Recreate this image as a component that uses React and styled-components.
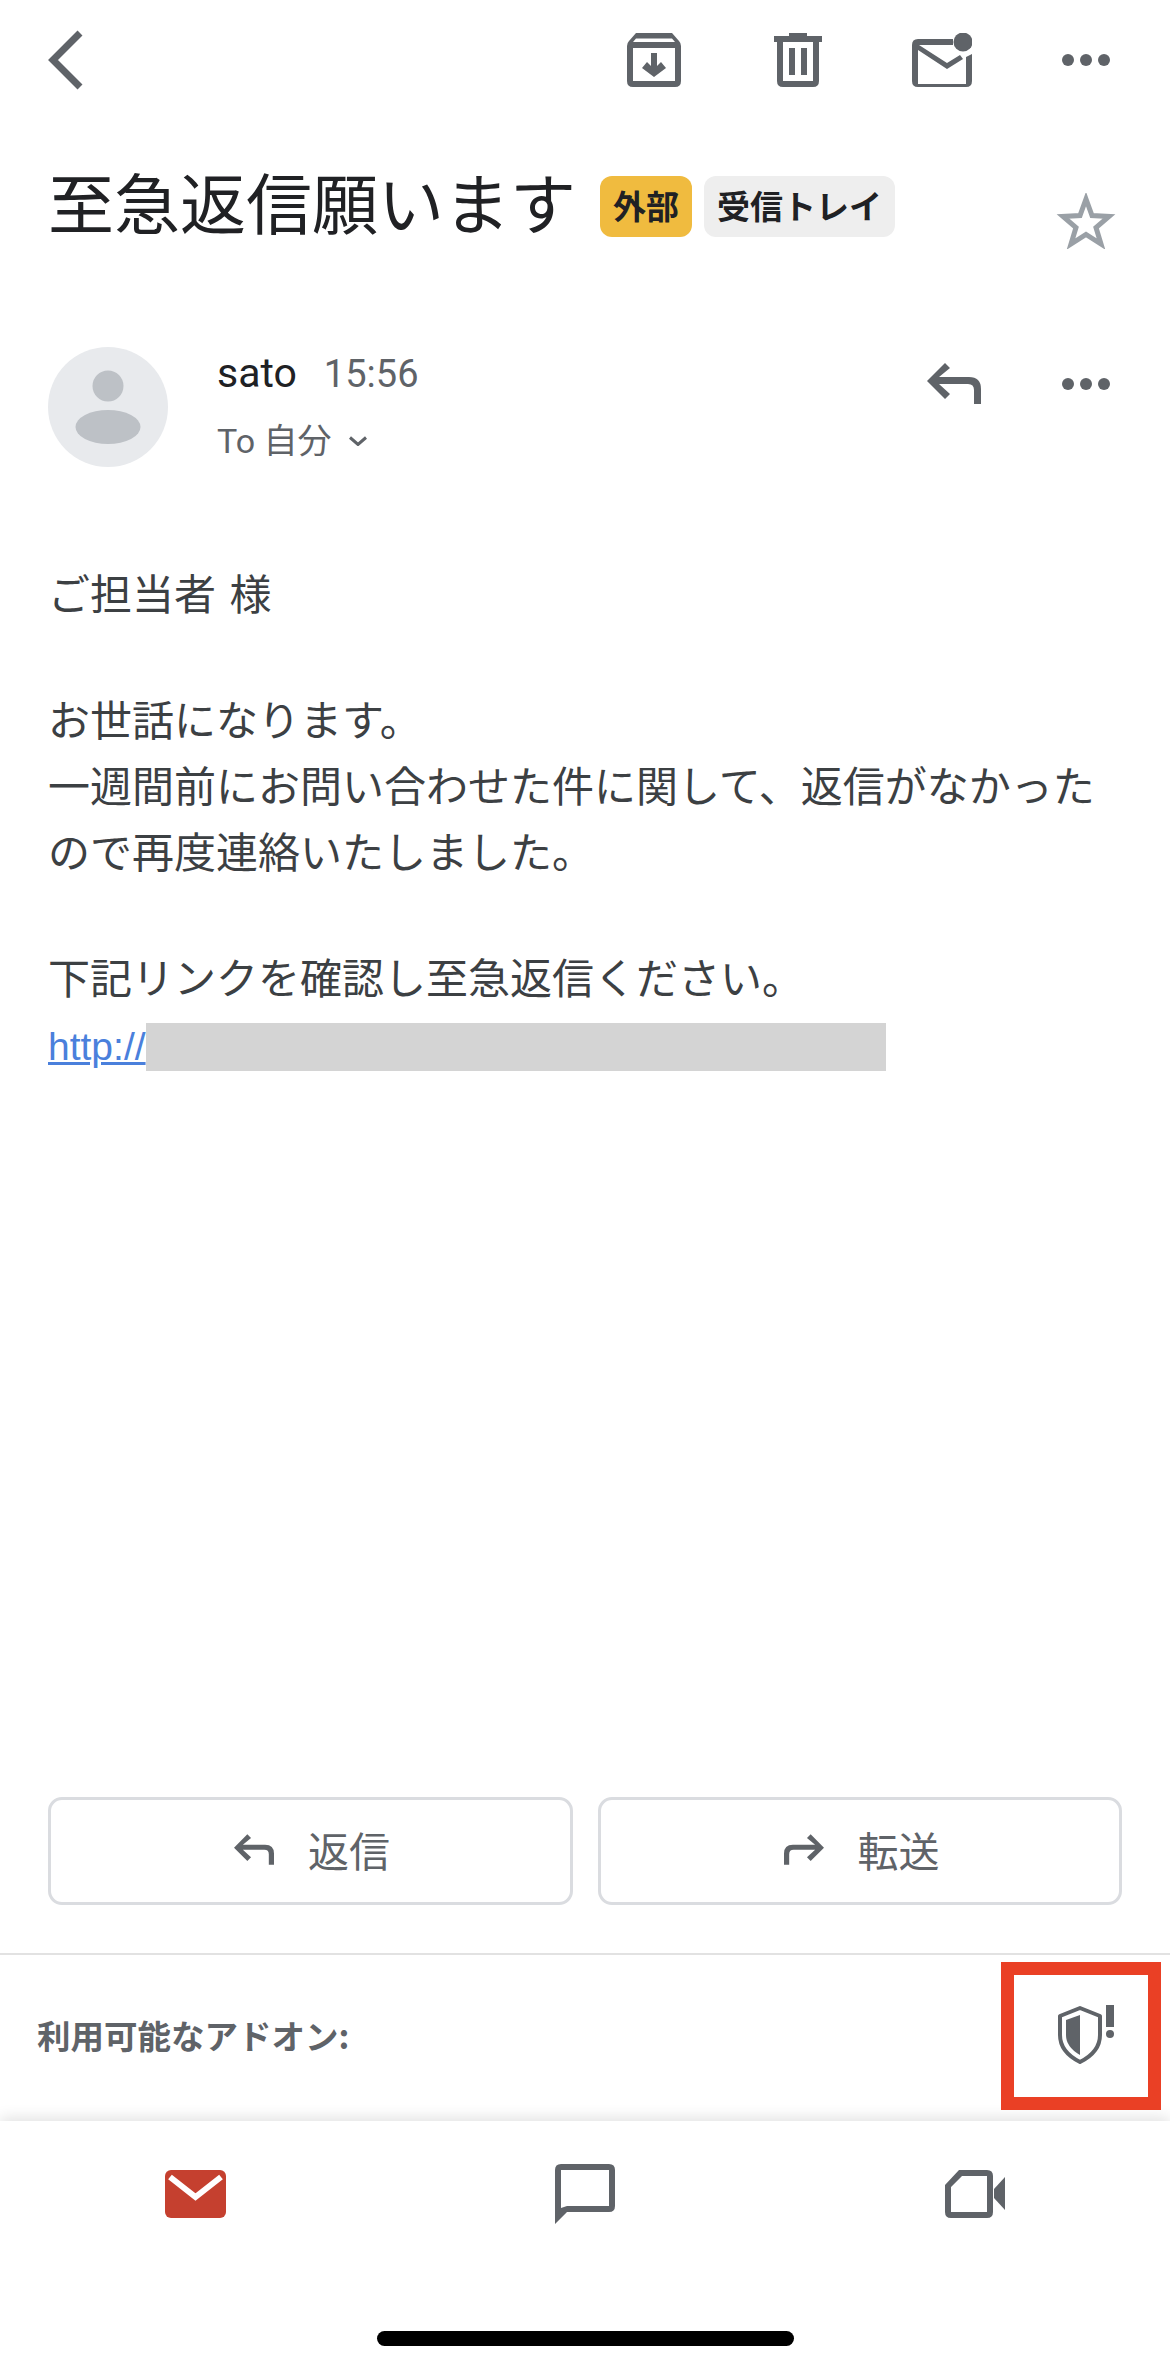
import React from "react";
import styled, { createGlobalStyle } from "styled-components";

const GRAY = "#5f6368";

const GlobalStyle = createGlobalStyle`
  html, body {
    margin: 0;
    padding: 0;
    background: #fff;
  }
  * {
    box-sizing: border-box;
  }
`;

const Page = styled.div`
  width: 1170px;
  height: 2367px;
  display: flex;
  flex-direction: column;
  background: #fff;
  overflow: hidden;
  font-family: Roboto, "Noto Sans CJK JP", sans-serif;
`;

const Toolbar = styled.div`
  height: 120px;
  flex: none;
  display: flex;
  align-items: center;
  justify-content: space-between;
  padding: 0 12px 0 48px;
`;
const ToolGroup = styled.div`
  display: flex;
  align-items: center;
`;
const IconSlot = styled.div`
  width: ${(props) => props.size || 144}px;
  display: flex;
  justify-content: center;
  align-items: center;
`;

const SubjectRow = styled.div`
  height: 227px;
  flex: none;
  display: flex;
  align-items: flex-start;
  padding: 56px 54px 0 48px;
`;
const Subject = styled.h1`
  margin: -7px 24px 0 0;
  font-size: 66px;
  line-height: 62px;
  font-weight: 400;
  color: #202124;
  font-family: "Noto Sans CJK JP", sans-serif;
  white-space: nowrap;
`;
const Tag = styled.span`
  height: 61px;
  margin-right: 12px;
  padding: 0 13px 4px;
  border-radius: 12px;
  display: flex;
  align-items: center;
  font-size: 33px;
  font-weight: 700;
  color: #202124;
  white-space: nowrap;
  background: ${(props) => (props.type === "ext" ? "#f0bb3f" : "#eeeeee")};
`;
const StarWrap = styled.div`
  margin-left: auto;
  padding-top: 17px;
`;

const SenderRow = styled.div`
  height: 120px;
  flex: none;
  display: flex;
  padding: 0 18px 0 48px;
`;
const Avatar = styled.div`
  width: 120px;
  height: 120px;
  flex: none;
  border-radius: 50%;
  background: #e8eaed;
  display: flex;
  align-items: center;
  justify-content: center;
`;
const SenderInfo = styled.div`
  margin-left: 49px;
  flex: 1;
  display: flex;
  flex-direction: column;
`;
const NameLine = styled.div`
  display: flex;
  align-items: baseline;
  height: 48px;
  margin-top: 2px;
`;
const Name = styled.span`
  font-size: 41px;
  line-height: 48px;
  color: #202124;
`;
const Time = styled.span`
  font-size: 38px;
  margin-left: 27px;
  color: ${GRAY};
`;
const ToLine = styled.div`
  display: flex;
  align-items: center;
  margin-top: 21px;
  font-size: 34px;
  line-height: 46px;
  color: ${GRAY};
  gap: 17px;
`;
const SenderTools = styled.div`
  display: flex;
  align-items: center;
  height: 41px;
  margin-top: 16px;
`;

const MailBody = styled.div`
  flex: 1;
  padding: 92px 48px 0;
  font-family: "Noto Sans CJK JP", sans-serif;
  font-size: 42px;
  line-height: 66px;
  word-spacing: 4px;
  color: #3c4043;
`;
const Para = styled.p`
  margin: 0 0 60px;
`;
const LinkLine = styled.div`
  display: flex;
  align-items: center;
  height: 68px;
  margin-top: 4px;
`;
const MailLink = styled.span`
  font-family: "Liberation Sans", Arial, sans-serif;
  font-size: 39px;
  color: #4a80dc;
  text-decoration: underline;
`;
const Redacted = styled.span`
  width: 740px;
  height: 48px;
  background: #d4d4d4;
`;

const Actions = styled.div`
  flex: none;
  display: grid;
  grid-template-columns: 525px 524px;
  gap: 25px;
  padding: 0 48px 48px;
`;
const ActionButton = styled.button`
  height: 108px;
  border: 3px solid #dadce0;
  border-radius: 14px;
  background: #fff;
  display: flex;
  align-items: center;
  justify-content: center;
  gap: 34px;
  font-family: "Noto Sans CJK JP", sans-serif;
  font-size: 41px;
  color: ${GRAY};
  padding: 0 0 4px 3px;
`;

const AddonRow = styled.div`
  position: relative;
  height: 168px;
  flex: none;
  border-top: 2px solid #e2e2e2;
  display: flex;
  align-items: center;
  justify-content: space-between;
  padding: 0 56px 7px 37px;
`;
const AddonLabel = styled.span`
  font-size: 33.5px;
  font-weight: 700;
  color: ${GRAY};
  font-family: "Noto Sans CJK JP", sans-serif;
`;
const Highlight = styled.div`
  position: absolute;
  right: 9px;
  top: 7px;
  width: 160px;
  height: 148px;
  border: 13px solid #ea4025;
  z-index: 2;
`;

const BottomNav = styled.div`
  height: 246px;
  flex: none;
  position: relative;
  background: #fff;
  box-shadow: 0 -3px 14px rgba(0, 0, 0, 0.12);
  display: flex;
  flex-direction: column;
  align-items: center;
`;
const NavIcons = styled.div`
  width: 100%;
  height: 62px;
  margin-top: 42px;
  display: grid;
  grid-template-columns: repeat(3, 390px);
  align-items: center;
  justify-items: center;
`;
const HomeBar = styled.div`
  width: 417px;
  height: 15px;
  margin-top: 106px;
  border-radius: 8px;
  background: #000;
`;

const Icon = ({ w, h, children }) => (
  <svg width={w} height={h} viewBox={`0 0 ${w} ${h}`} style={{ display: "block" }}>
    {children}
  </svg>
);

const BackIcon = () => (
  <Icon w={35} h={60}>
    <path d="M32 3 5 30l27 27" fill="none" stroke={GRAY} strokeWidth="7" />
  </Icon>
);

const ArchiveIcon = () => (
  <Icon w={54} h={54}>
    <path
      fillRule="evenodd"
      fill={GRAY}
      d="M9 0h36l7 8q2 2 2 5v35q0 6-6 6H6q-6 0-6-6V13q0-3 2-5zM9 5.500 6 9h42l-3-3.500zM6 15v33h42V15z"
    />
    <path fill={GRAY} d="M24 20h6v13l4-4 5 6-12 9-12-9 5-6 4 4z" />
  </Icon>
);

const TrashIcon = () => (
  <Icon w={48} h={54}>
    <path
      fillRule="evenodd"
      fill={GRAY}
      d="M15 0h18v3h15v6h-3v39q0 6-6 6H9q-6 0-6-6V9H0V3h15zM9 9v39h30V9z"
    />
    <path fill={GRAY} d="M15 15h6v27h-6zM27 15h6v27h-6z" />
  </Icon>
);

const MailDotIcon = () => (
  <Icon w={60} h={54}>
    <circle cx="51" cy="9" r="9.500" fill={GRAY} />
    <path
      fill={GRAY}
      d="M6 6h35v6H7l28 18 13-8 3 4-16 10L6 17v34h48V24l6-3v27q0 6-6 6H6q-6 0-6-6V12q0-6 6-6z"
    />
  </Icon>
);

const DotsIcon = () => (
  <Icon w={48} h={14}>
    <circle cx="6" cy="7" r="6" fill={GRAY} />
    <circle cx="24" cy="7" r="6" fill={GRAY} />
    <circle cx="42" cy="7" r="6" fill={GRAY} />
  </Icon>
);

const StarIcon = () => (
  <Icon w={60} h={56}>
    <path
      d="M30 6 36 22.500 53 23.500 40 34.500 45 51 30 41.500 15 51 20 34.500 7 23.500 24 22.500z"
      fill="none"
      stroke="#9aa0a6"
      strokeWidth="5"
    />
  </Icon>
);

const ReplyIcon = ({ w = 54, h = 41, flip }) => (
  <svg
    width={w}
    height={h}
    viewBox="0 0 54 41"
    style={{ display: "block", transform: flip ? "scaleX(-1)" : "none" }}
  >
    <path
      fill={GRAY}
      d="M18 0 23 5 12 14h30q12 0 12 12v15h-7V27q0-6-6-6H12l11 10-5 5L0 18z"
    />
  </svg>
);

const Chevron = () => (
  <Icon w={20} h={10}>
    <path d="M2 1.500 10 8.500 18 1.500" fill="none" stroke={GRAY} strokeWidth="3" />
  </Icon>
);

const PersonIcon = () => (
  <Icon w={66} h={74}>
    <circle cx="33" cy="16" r="15.500" fill="#bdc1c6" />
    <ellipse cx="33" cy="57" rx="32.500" ry="17" fill="#bdc1c6" />
  </Icon>
);

const ShieldIcon = () => (
  <Icon w={58} h={60}>
    <path
      d="M24 3 44 11v19q0 17-20 27Q4 47 4 30V11z"
      fill="none"
      stroke={GRAY}
      strokeWidth="4"
      strokeLinejoin="round"
    />
    <path d="M24 10 10 15v15q0 12 14 20z" fill={GRAY} />
    <path d="M50 0h8v22h-8z" fill={GRAY} />
    <circle cx="54" cy="29" r="4" fill={GRAY} />
  </Icon>
);

const NavMailIcon = () => (
  <Icon w={61} h={48}>
    <rect width="61" height="48" rx="6" fill="#c5402f" />
    <path d="M5 7 30.500 27 56 7" fill="none" stroke="#fff" strokeWidth="6" />
  </Icon>
);

const NavChatIcon = () => (
  <Icon w={60} h={60}>
    <path
      fillRule="evenodd"
      fill={GRAY}
      d="M6 0h48q6 0 6 6v36q0 6-6 6H12L0 60V6q0-6 6-6zM6 6v38l6-2h42V6z"
    />
  </Icon>
);

const NavVideoIcon = () => (
  <Icon w={60} h={48}>
    <path
      fillRule="evenodd"
      fill={GRAY}
      d="M14 0h28q6 0 6 6v36q0 6-6 6H6q-6 0-6-6V15zM17 6 6 17v25h36V6z"
    />
    <path fill={GRAY} d="M60 7v33L49 28v-9z" />
  </Icon>
);

const App = () => {
  return (
    <Page>
      <GlobalStyle />
      <Toolbar>
        <BackIcon />
        <ToolGroup>
          <IconSlot><ArchiveIcon /></IconSlot>
          <IconSlot><TrashIcon /></IconSlot>
          <IconSlot><MailDotIcon /></IconSlot>
          <IconSlot><DotsIcon /></IconSlot>
        </ToolGroup>
      </Toolbar>

      <SubjectRow>
        <Subject>至急返信願います</Subject>
        <Tag type="ext">外部</Tag>
        <Tag>受信トレイ</Tag>
        <StarWrap><StarIcon /></StarWrap>
      </SubjectRow>

      <SenderRow>
        <Avatar><PersonIcon /></Avatar>
        <SenderInfo>
          <NameLine>
            <Name>sato</Name>
            <Time>15:56</Time>
          </NameLine>
          <ToLine>
            <span>To 自分</span>
            <Chevron />
          </ToLine>
        </SenderInfo>
        <SenderTools>
          <IconSlot size={132}><ReplyIcon /></IconSlot>
          <IconSlot size={132}><DotsIcon /></IconSlot>
        </SenderTools>
      </SenderRow>

      <MailBody>
        <Para>ご担当者 様</Para>
        <Para>
          お世話になります。
          <br />
          一週間前にお問い合わせた件に関して、返信がなかった
          <br />
          ので再度連絡いたしました。
        </Para>
        <div>下記リンクを確認し至急返信ください。</div>
        <LinkLine>
          <MailLink>http://</MailLink>
          <Redacted />
        </LinkLine>
      </MailBody>

      <Actions>
        <ActionButton>
          <ReplyIcon w={40} h={31} />
          返信
        </ActionButton>
        <ActionButton>
          <ReplyIcon w={40} h={31} flip />
          転送
        </ActionButton>
      </Actions>

      <AddonRow>
        <AddonLabel>利用可能なアドオン:</AddonLabel>
        <ShieldIcon />
        <Highlight />
      </AddonRow>

      <BottomNav>
        <NavIcons>
          <NavMailIcon />
          <NavChatIcon />
          <NavVideoIcon />
        </NavIcons>
        <HomeBar />
      </BottomNav>
    </Page>
  );
};

export default App;
